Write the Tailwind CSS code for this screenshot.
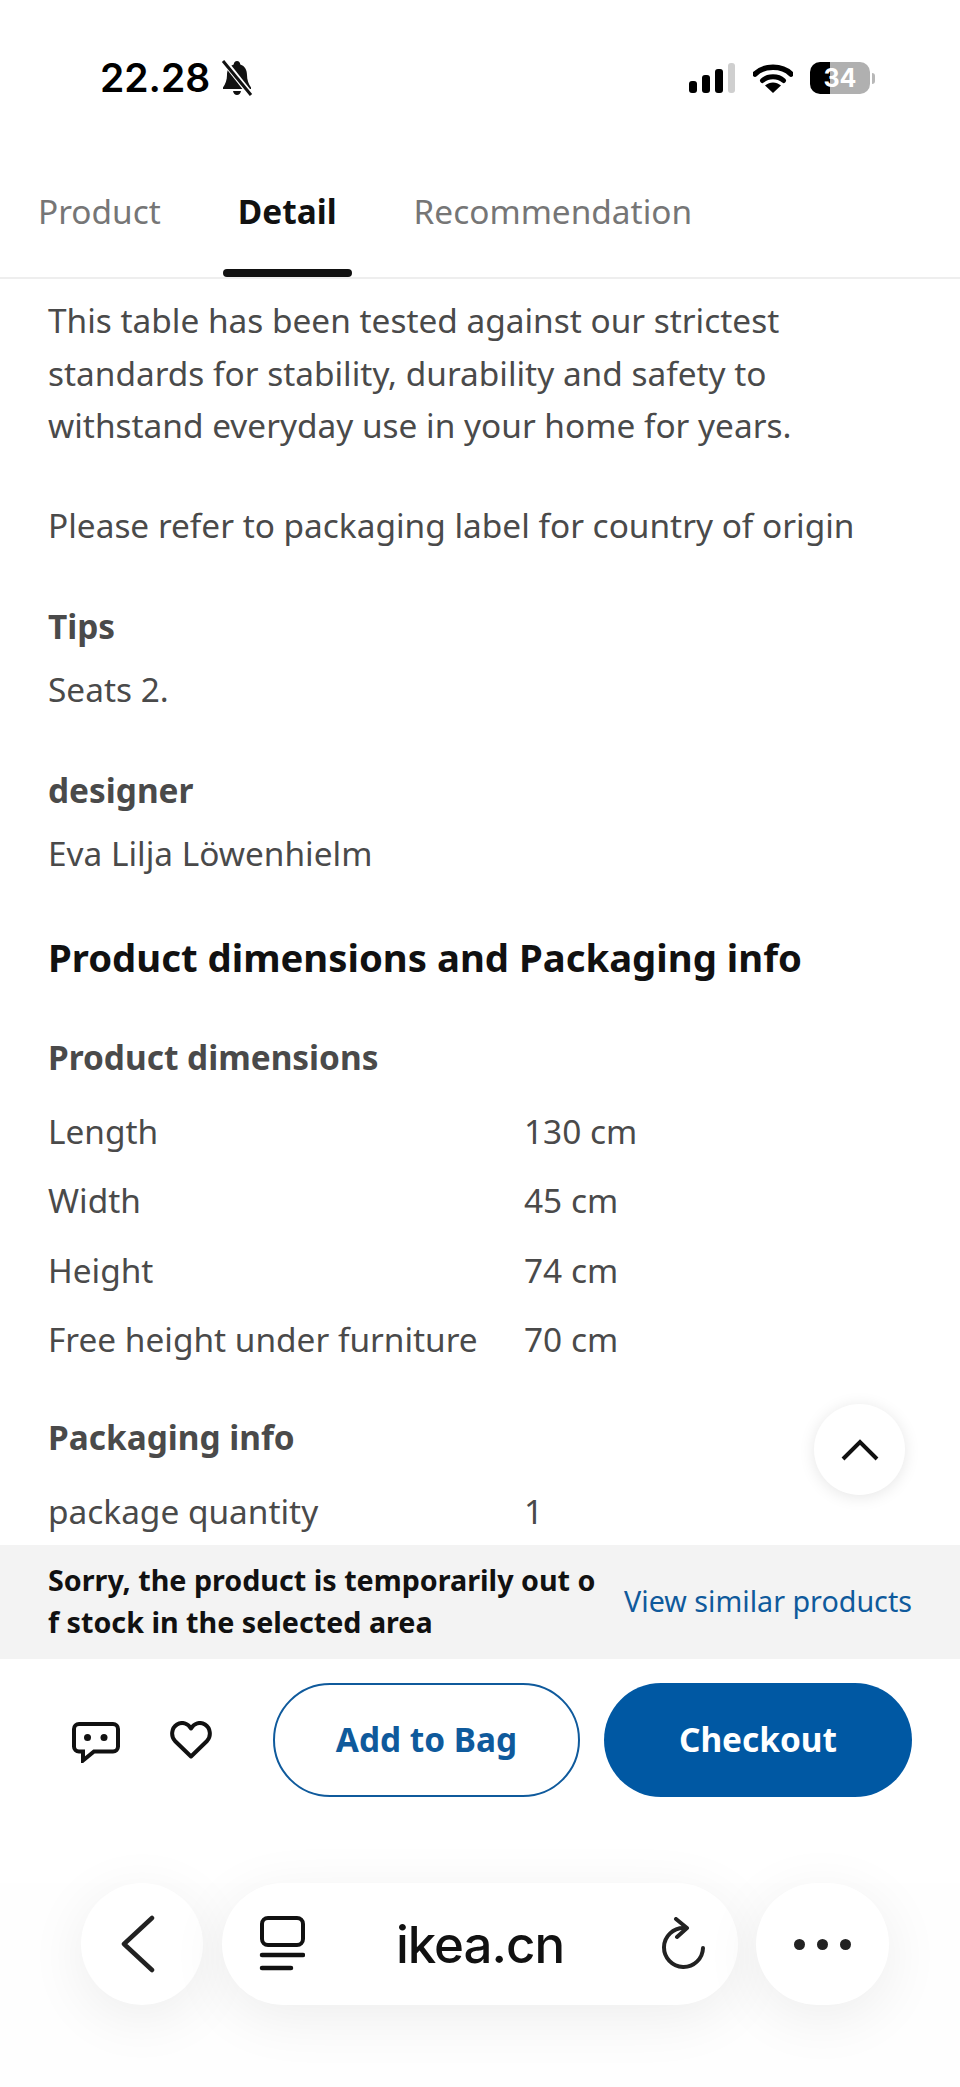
<!DOCTYPE html>
<html lang="en">
<head>
    <meta charset="UTF-8">
    <meta name="viewport" content="width=device-width, initial-scale=1.0">
    <title>Detail</title>
    <script src="https://cdn.jsdelivr.net/npm/@tailwindcss/browser@4"></script>
</head>
<body class="bg-white">
    <div class="relative w-[960px] h-[2087px] overflow-hidden flex flex-col font-['Noto_Sans',sans-serif] text-[#4a4a4a]">
        <!-- status bar -->
        <div class="h-[157px] shrink-0 flex items-start justify-between pt-[61px] pl-[100px] pr-[85px]">
            <div class="flex items-center gap-[10px] h-[34px]">
                <span class="font-['Inter',sans-serif] font-semibold text-[39px] leading-[34px] text-black">22.28</span>
                <svg class="w-[34px] h-[36px]" viewBox="0 0 34 36">
                    <path d="M17 1c2 0 3 1.500 3.300 3.500C25 6 27 10 27 15c0 5 1.500 9 4 12.500V29H3v-1.500C5.500 24 7 20 7 15c0-5 2-9 6.700-10.500C14 2.500 15 1 17 1zM13 31h8c-.5 2.500-2 4-4 4s-3.500-1.500-4-4z" fill="#111"/>
                    <path d="M4 1l27 34" stroke="#fff" stroke-width="6"/>
                    <path d="M3 1l28 34" stroke="#111" stroke-width="3"/>
                </svg>
            </div>
            <div class="flex items-center gap-[17px] h-[32px] mt-[1px]">
                <svg class="w-[48px] h-[32px]" viewBox="0 0 48 32">
                    <rect x="1" y="19" width="8" height="12" rx="3" fill="#000"/>
                    <rect x="14" y="13" width="8" height="18" rx="3" fill="#000"/>
                    <rect x="27" y="7" width="8" height="24" rx="3" fill="#000"/>
                    <rect x="40" y="1" width="7" height="30" rx="3" fill="#cfcfcf"/>
                </svg>
                <svg class="w-[40px] h-[30px]" viewBox="0 0 40 30">
                    <path d="M2 11C11 2 29 2 38 11" fill="none" stroke="#000" stroke-width="5.500" stroke-linecap="round"/>
                    <path d="M9.500 17.500C15 12.500 25 12.500 30.500 17.500" fill="none" stroke="#000" stroke-width="5" stroke-linecap="round"/>
                    <path d="M12 22.500C17 18.500 23 18.500 28 22.500L20 30z" fill="#000"/>
                </svg>
                <div class="flex items-center">
                    <div class="w-[60px] h-[32px] rounded-[10px] bg-[linear-gradient(90deg,#000_0,#000_20px,#b0b0b0_20px,#b0b0b0_100%)] flex items-center justify-center font-['Inter',sans-serif] font-bold text-[25px] leading-none text-white">34</div>
                    <div class="w-[3px] h-[11px] rounded-r-full bg-[#b8b8b8] ml-[2px]"></div>
                </div>
            </div>
        </div>

        <!-- tabs -->
        <div class="h-[122px] shrink-0 relative flex items-start border-b-2 border-[#eeeeee] text-[33.4px] leading-[44px] pt-[32px] pl-[38px]">
            <span class="text-[#767676]">Product</span>
            <span class="ml-[77px] font-bold text-[#111111]">Detail</span>
            <span class="ml-[77px] text-[#767676]">Recommendation</span>
            <div class="absolute left-[223px] top-[112px] w-[129px] h-[8px] rounded-full bg-[#111111]"></div>
        </div>

        <!-- content -->
        <div class="flex-1 overflow-hidden px-[48px] text-[33.4px] leading-[52.5px]">
            <p class="mt-[15px]">This table has been tested against our strictest standards for stability, durability and safety to withstand everyday use in your home for years.</p>
            <p class="mt-[47px]">Please refer to packaging label for country of origin</p>
            <h4 class="mt-[49px] font-bold">Tips</h4>
            <p class="mt-[10px]">Seats 2.</p>
            <h4 class="mt-[49px] font-bold">designer</h4>
            <p class="mt-[10px]">Eva Lilja Löwenhielm</p>
            <h3 class="mt-[52px] font-bold text-[38.3px] text-[#111111]">Product dimensions and Packaging info</h3>
            <h4 class="mt-[47px] font-bold">Product dimensions</h4>
            <div class="mt-[22px] grid grid-cols-[476px_1fr] auto-rows-[69.3px]">
                <div>Length</div><div>130 cm</div>
                <div>Width</div><div>45 cm</div>
                <div>Height</div><div>74 cm</div>
                <div>Free height under furniture</div><div>70 cm</div>
            </div>
            <h4 class="mt-[29px] font-bold">Packaging info</h4>
            <div class="mt-[21px] grid grid-cols-[476px_1fr]">
                <div>package quantity</div><div>1</div>
            </div>
        </div>

        <!-- out of stock banner -->
        <div class="h-[114px] shrink-0 bg-[#f3f3f3] flex items-center justify-between pl-[48px] pr-[48px] pb-[2px]">
            <p class="w-[552px] break-all font-bold text-[28.7px] leading-[42.500px] text-[#111111]">Sorry, the product is temporarily out of stock in the selected area</p>
            <span class="text-[28.7px] text-[#0f5a9c] whitespace-nowrap">View similar products</span>
        </div>

        <!-- actions -->
        <div class="h-[224px] shrink-0 flex items-start pt-[24px] pl-[72px]">
            <svg class="mt-[39px] w-[48px] h-[41px]" viewBox="0 0 48 41">
                <path d="M7 2h34a5 5 0 0 1 5 5v17.500a5 5 0 0 1-5 5H22L11 38.500V29.500H7a5 5 0 0 1-5-5V7a5 5 0 0 1 5-5z" fill="none" stroke="#111" stroke-width="4"/>
                <circle cx="15.500" cy="15.500" r="3.500" fill="#111"/>
                <circle cx="32" cy="15.500" r="3.500" fill="#111"/>
            </svg>
            <svg class="ml-[50px] mt-[38px] w-[42px] h-[38px]" viewBox="0 0 42 38">
                <path d="M21 35.500L5 20C0.500 15 1.500 7 7 3.500c5-3 11-1.500 14 4 3-5.500 9-7 14-4 5.500 3.500 6.500 11.500 2 16.500z" fill="none" stroke="#111" stroke-width="4" stroke-linejoin="round"/>
            </svg>
            <button class="ml-[61px] w-[307px] h-[114px] rounded-full border-2 border-[#0f5a9c] font-bold text-[33.4px] text-[#0f5a9c] pb-[2px]">Add to Bag</button>
            <button class="ml-[24px] w-[308px] h-[114px] rounded-full bg-[#0058a3] font-bold text-[33.4px] text-white pb-[2px]">Checkout</button>
        </div>

        <!-- browser bar -->
        <div class="h-[204px] shrink-0 flex items-start pl-[81px] bg-[#fefefe]">
            <div class="w-[122px] h-[122px] rounded-full bg-white shadow-[0_12px_60px_rgba(0,0,0,0.07)] flex items-center justify-center pr-[8px]">
                <svg class="w-[34px] h-[58px]" viewBox="0 0 34 58">
                    <path d="M31 3L3 29l28 26" fill="none" stroke="#222" stroke-width="4.500" stroke-linecap="round" stroke-linejoin="round"/>
                </svg>
            </div>
            <div class="ml-[19px] w-[516px] h-[122px] rounded-full bg-white shadow-[0_12px_60px_rgba(0,0,0,0.07)] flex items-center pl-[37px] pr-[33px] justify-between">
                <svg class="w-[46px] h-[56px]" viewBox="0 0 46 56">
                    <rect x="3" y="2" width="41" height="27" rx="6" fill="none" stroke="#111" stroke-width="4"/>
                    <path d="M3 39h41M3 52h29" stroke="#111" stroke-width="4.500" stroke-linecap="round"/>
                </svg>
                <span class="font-['Inter',sans-serif] font-medium text-[51px] leading-none tracking-[-1px] text-[#111111] mr-[6px]">ikea.cn</span>
                <svg class="w-[44px] h-[54px]" viewBox="0 0 44 54">
                    <path d="M23 11A19.500 19.500 0 1 0 42 31" fill="none" stroke="#222" stroke-width="4" stroke-linecap="round"/>
                    <path d="M15 2l11 9-10 9" fill="none" stroke="#222" stroke-width="4" stroke-linecap="round" stroke-linejoin="round"/>
                </svg>
            </div>
            <div class="ml-[18px] w-[133px] h-[122px] rounded-full bg-white shadow-[0_12px_60px_rgba(0,0,0,0.07)] flex items-center justify-center gap-[12px]">
                <span class="w-[11px] h-[11px] rounded-full bg-[#222222]"></span>
                <span class="w-[11px] h-[11px] rounded-full bg-[#222222]"></span>
                <span class="w-[11px] h-[11px] rounded-full bg-[#222222]"></span>
            </div>
        </div>

        <!-- back to top -->
        <div class="absolute left-[814px] top-[1404px] w-[91px] h-[91px] rounded-full bg-white shadow-[0_2px_16px_rgba(0,0,0,0.1)] flex items-center justify-center">
            <svg class="w-[40px] h-[24px]" viewBox="0 0 40 24">
                <path d="M3 21L20 4l17 17" fill="none" stroke="#111" stroke-width="4"/>
            </svg>
        </div>
    </div>
</body>
</html>
